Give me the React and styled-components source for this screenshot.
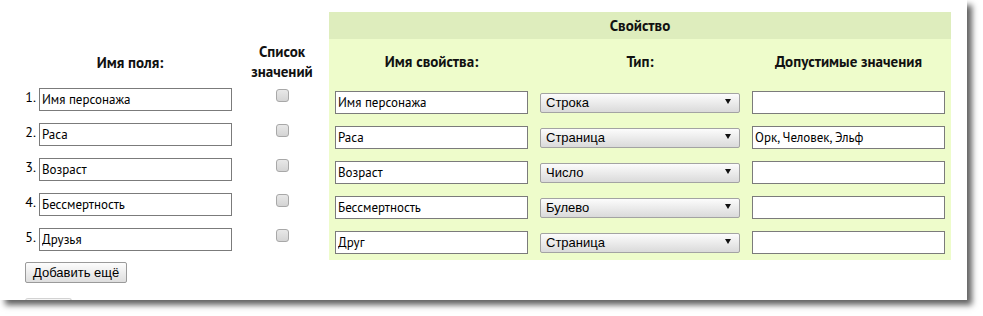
import React from 'react';
import styled, {createGlobalStyle} from 'styled-components';

const GlobalStyle = createGlobalStyle`
    html, body {
        margin: 0;
        padding: 0;
        background: #fff;
    }
    body {
        font-family: "PT Sans", Roboto, "Noto Sans", sans-serif;
        color: #000;
    }
`;

const fields = ['Имя персонажа', 'Раса', 'Возраст', 'Бессмертность', 'Друзья'];

const properties = [
    {name: 'Имя персонажа', type: 'Строка', values: ''},
    {name: 'Раса', type: 'Страница', values: 'Орк, Человек, Эльф'},
    {name: 'Возраст', type: 'Число', values: ''},
    {name: 'Бессмертность', type: 'Булево', values: ''},
    {name: 'Друг', type: 'Страница', values: ''},
];

const types = ['Строка', 'Страница', 'Число', 'Булево'];

const App = () => {
    return (
        <>
            <GlobalStyle/>
            <Page>
                <Panel>
                    <FieldsSection>
                        <FieldHead>
                            <HeadText $span>Имя поля:</HeadText>
                            <ListHead>Список<br/>значений</ListHead>
                        </FieldHead>
                        {fields.map((f, i) => (
                            <FieldRow key={i}>
                                <Num>{i + 1}.</Num>
                                <TextInput defaultValue={f}/>
                                <Check type="checkbox"/>
                            </FieldRow>
                        ))}
                        <Button>Добавить ещё</Button>
                        {/* top edge of the next button, cut off by the panel */}
                        <ButtonStub/>
                    </FieldsSection>

                    <PropertyBlock>
                        <BlockTitle>Свойство</BlockTitle>
                        <PropHead>
                            <HeadText>Имя свойства:</HeadText>
                            <HeadText>Тип:</HeadText>
                            <HeadText>Допустимые значения</HeadText>
                        </PropHead>
                        {properties.map((p, i) => (
                            <PropRow key={i}>
                                <TextInput defaultValue={p.name}/>
                                <SelectWrap>
                                    <Select defaultValue={p.type}>
                                        {types.map(t => <option key={t}>{t}</option>)}
                                    </Select>
                                    <Arrow/>
                                </SelectWrap>
                                <TextInput defaultValue={p.values}/>
                            </PropRow>
                        ))}
                    </PropertyBlock>
                </Panel>
            </Page>
        </>
    );
};

// --- Styled Components ---

const Page = styled.div`
    width: 983px;
    height: 316px;
    overflow: hidden;
    background: #fff;
`;

const Panel = styled.div`
    display: flex;
    align-items: flex-start;
    box-sizing: border-box;
    width: 967px;
    height: 300px;
    padding-top: 12px;
    background: #fff;
    overflow: hidden;
    box-shadow: 5px 5px 6px rgba(0, 0, 0, 0.62);
`;

const FieldsSection = styled.div`
    display: flex;
    flex-direction: column;
    width: 309px;
    padding: 27px 0 0 20px;
`;

const fieldColumns = `
    display: grid;
    grid-template-columns: 19px 193px 97px;
`;

const FieldHead = styled.div`
    ${fieldColumns};
    height: 46px;
    align-items: center;
    margin-bottom: 3px;
`;

const HeadText = styled.div`
    font-size: 15px;
    font-weight: bold;
    text-align: center;
    color: #111;
    ${({$span}) => $span && `
        grid-column: 1 / 3;
        padding-left: 8px;
    `}
`;

const ListHead = styled(HeadText)`
    line-height: 20px;
    padding-left: 3px;
`;

const FieldRow = styled.div`
    ${fieldColumns};
    height: 23px;
    margin-bottom: 12px;
    align-items: start;
`;

const Num = styled.div`
    font-size: 14px;
    line-height: 16px;
    text-align: right;
    padding-right: 3px;
    margin-top: 1px;
`;

const TextInput = styled.input`
    box-sizing: border-box;
    width: 193px;
    height: 23px;
    margin: 0;
    padding: 0 2px;
    border: 1px solid #7b7b7b;
    background: #fff;
    font-family: "PT Sans", Roboto, "Noto Sans", sans-serif;
    font-size: 13px;
    color: #000;
    outline: none;
`;

const Check = styled.input`
    appearance: none;
    justify-self: center;
    box-sizing: border-box;
    width: 13px;
    height: 13px;
    margin: 1px 0 0 3px;
    border: 1px solid #a8a8a8;
    border-radius: 3px;
    background: linear-gradient(#e8e8e8, #d4d4d4);
`;

const Button = styled.button`
    align-self: flex-start;
    box-sizing: border-box;
    height: 21px;
    margin: -1px 0 0 5px;
    padding: 0 7px;
    border: 1px solid #9a9a9a;
    border-radius: 2px;
    background: linear-gradient(#fdfdfd, #dedede);
    font-family: "Liberation Sans", Arial, sans-serif;
    font-size: 13px;
    line-height: 19px;
    color: #000;
`;

const ButtonStub = styled.div`
    align-self: flex-start;
    width: 45px;
    height: 2px;
    margin: 15px 0 0 5px;
    border: 1px solid #d2d2d2;
    border-bottom: none;
    border-radius: 3px 3px 0 0;
    background: #f6f6f6;
`;

const PropertyBlock = styled.div`
    width: 622px;
    box-sizing: border-box;
    padding: 0 6px 6px;
    background: #eefccb;
`;

const BlockTitle = styled.div`
    margin: 0 -6px;
    height: 27px;
    line-height: 27px;
    background: #deedbd;
    text-align: center;
    font-size: 15px;
    font-weight: bold;
    color: #111;
`;

const propColumns = `
    display: grid;
    grid-template-columns: 193px 200px 193px;
    column-gap: 12px;
`;

const PropHead = styled.div`
    ${propColumns};
    height: 45px;
    align-items: center;
    margin-bottom: 7px;
`;

const PropRow = styled.div`
    ${propColumns};
    height: 23px;
    align-items: start;
    & + & {
        margin-top: 12px;
    }
`;

const SelectWrap = styled.div`
    position: relative;
    height: 20px;
`;

const Select = styled.select`
    appearance: none;
    box-sizing: border-box;
    width: 100%;
    height: 20px;
    margin: 0;
    padding: 0 0 0 5px;
    border: 1px solid #a3a3a3;
    border-radius: 2px;
    background: linear-gradient(#fcfcfc, #dadada);
    font-family: "Liberation Sans", Arial, sans-serif;
    font-size: 13px;
    color: #000;
    outline: none;
`;

const Arrow = styled.span`
    position: absolute;
    right: 9px;
    top: 8px;
    width: 0;
    height: 0;
    border-left: 3px solid transparent;
    border-right: 3px solid transparent;
    border-top: 5px solid #111;
    pointer-events: none;
`;

export default App;
